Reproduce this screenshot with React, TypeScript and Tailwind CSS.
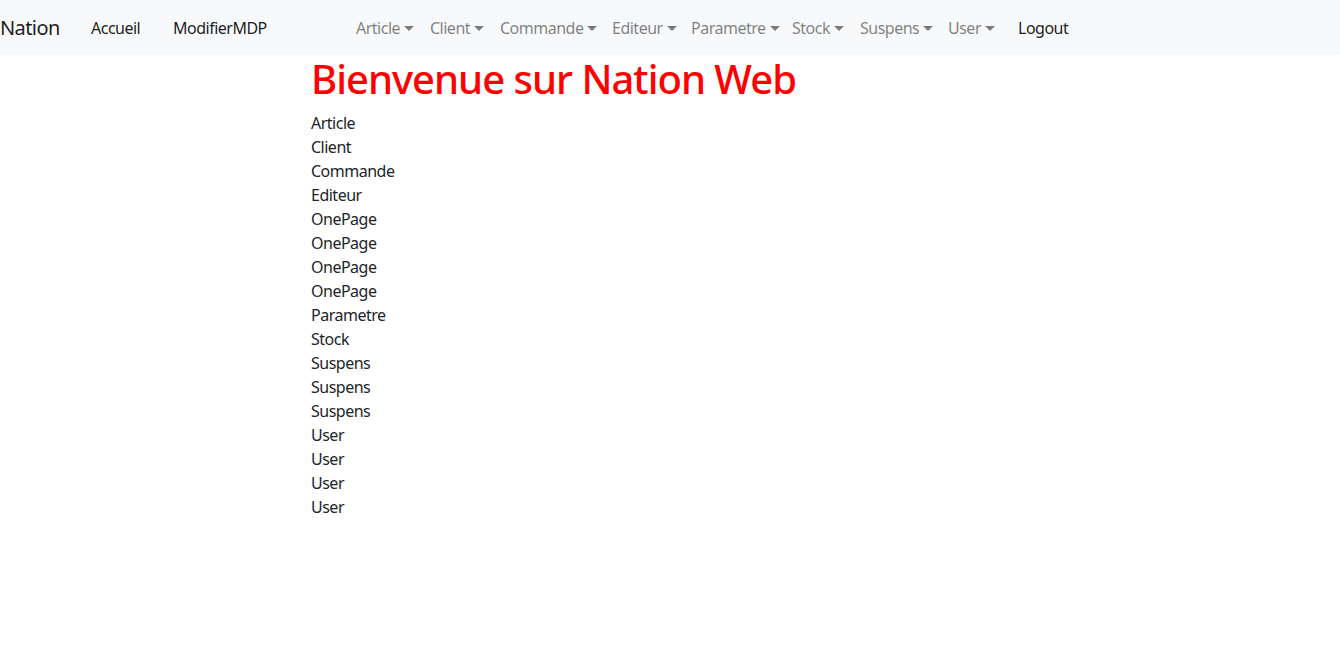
import React from "react";

const font = { fontFamily: '"Noto Sans", "Open Sans", sans-serif' };

function Caret() {
  return (
    <span className="ml-[4px] inline-block h-0 w-0 border-x-[5px] border-t-[5px] border-x-transparent border-t-current align-[3px]" />
  );
}

const dropdowns: [string, string][] = [
  ["Article", "w-[74px]"],
  ["Client", "w-[70px]"],
  ["Commande", "w-[112px]"],
  ["Editeur", "w-[79px]"],
  ["Parametre", "w-[101px]"],
  ["Stock", "w-[68px]"],
  ["Suspens", "w-[88px]"],
  ["User", "w-[70px]"],
];

const items = [
  "Article",
  "Client",
  "Commande",
  "Editeur",
  "OnePage",
  "OnePage",
  "OnePage",
  "OnePage",
  "Parametre",
  "Stock",
  "Suspens",
  "Suspens",
  "Suspens",
  "User",
  "User",
  "User",
  "User",
];

export default function App() {
  return (
    <div className="min-h-[659px] bg-white text-[#212529] tracking-[-0.5px]" style={font}>
      <nav className="flex h-[55px] items-center bg-[#f8f9fa] text-[16px] leading-6">
        <div className="w-[91px] shrink-0 text-[20px] leading-[30px] tracking-[-0.6px] text-[rgba(0,0,0,0.9)]">Nation</div>
        <div className="w-[82px] shrink-0 text-[rgba(0,0,0,0.9)]">Accueil</div>
        <div className="w-[183px] shrink-0 text-[rgba(0,0,0,0.9)]">ModifierMDP</div>
        {dropdowns.map(([label, w]) => (
          <div key={label} className={`${w} shrink-0 whitespace-nowrap text-[rgba(0,0,0,0.5)]`}>
            {label}
            <Caret />
          </div>
        ))}
        <div className="shrink-0 text-[rgba(0,0,0,0.9)]">Logout</div>
      </nav>
      <main className="pl-[311px]">
        <h1 className="mb-2 text-[40px] font-medium leading-[48px] tracking-[-1px] text-[#ff0000]">Bienvenue sur Nation Web</h1>
        <div className="flex flex-col text-[16px] leading-6">
          {items.map((t, i) => (
            <div key={i}>{t}</div>
          ))}
        </div>
      </main>
    </div>
  );
}
